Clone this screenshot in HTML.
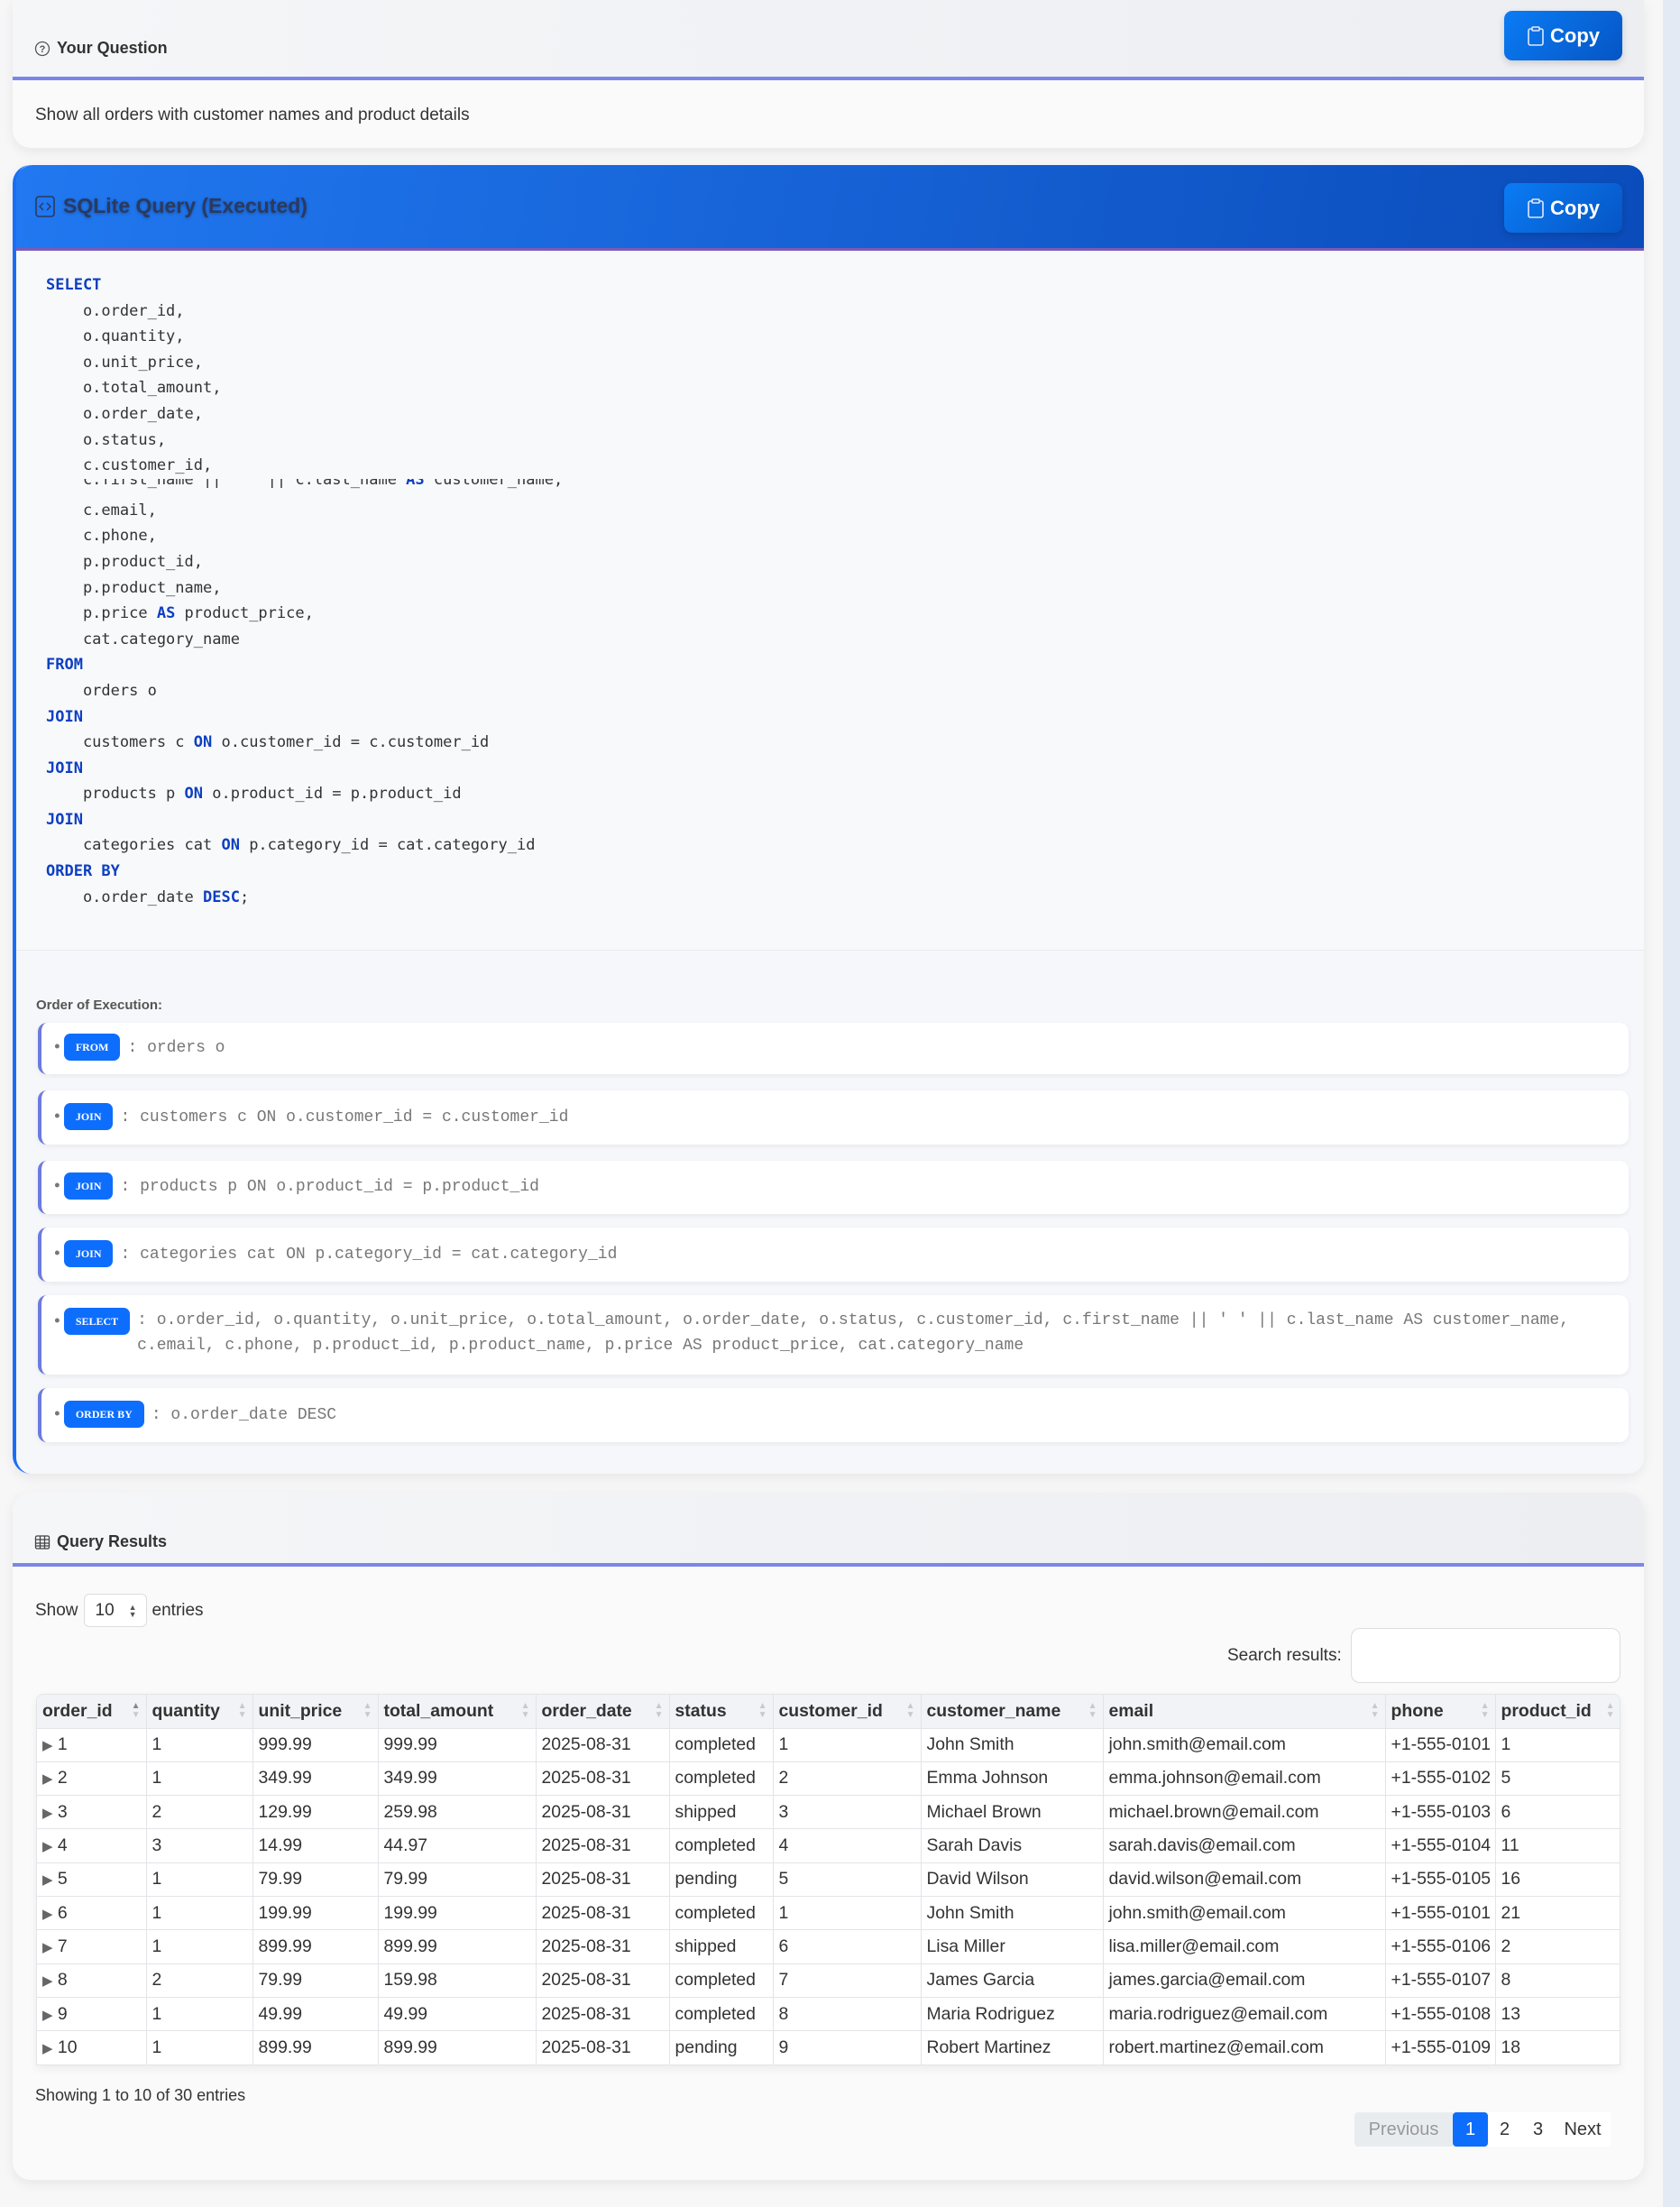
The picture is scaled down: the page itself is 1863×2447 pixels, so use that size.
<!DOCTYPE html>
<html><head><meta charset="utf-8"><style>
*{box-sizing:border-box;margin:0;padding:0}
body{width:1863px;height:2447px;background:#f7f7f8;font-family:"Liberation Sans",sans-serif;color:#333;position:relative;overflow:hidden}
.strip{position:absolute;left:1844px;top:0;width:19px;height:2447px;background:#e3eaf3}
.card{position:absolute;left:14px;width:1809px;background:#fafafa;border-radius:0 0 20px 20px;box-shadow:0 4px 14px rgba(0,0,0,.07)}
.hdr{background:linear-gradient(90deg,#f5f6f8,#eceef2);border-bottom:4px solid #7b86e8;position:relative}
.copy{position:absolute;right:24px;width:131px;height:55px;border-radius:9px;background:linear-gradient(135deg,#0a7cf5,#0655c4);color:#fff;font-weight:bold;font-size:22px;display:flex;align-items:center;justify-content:center;gap:6px;box-shadow:0 3px 8px rgba(0,0,0,.15)}
.mono{font-family:"DejaVu Sans Mono",monospace}
.code{font-size:17px;line-height:28.6px;color:#333;white-space:pre;padding-left:33px}
.k{color:#0d3fc1;font-weight:bold}
.item{position:absolute;left:24px;width:1764px;background:#fff;border-left:4px solid #6b7be0;border-radius:10px;box-shadow:0 2px 6px rgba(0,0,0,.06);font-family:"Liberation Mono",monospace;font-size:18px;color:#777}
.badge{display:inline-block;background:#0d6efd;color:#fff;font-family:"Liberation Serif",serif;font-weight:bold;font-size:12px;height:30px;line-height:30px;padding:0 13px;border-radius:7px;vertical-align:middle;margin:0 8px 0 2px}
table{border-collapse:collapse;font-size:19.4px;color:#333}
th{font-weight:bold;text-align:left;background:#f1f3f6;height:37px;padding:0 6px;border-right:1px solid #e2e4e8;position:relative;white-space:nowrap}
td{height:37.3px;padding:0 6px;border-right:1px solid #e2e4e8;border-top:1px solid #e2e4e8;background:#fff;white-space:nowrap;overflow:hidden}
th span{position:absolute;right:6px;top:8px;font-size:10px;color:#c5c9d0;line-height:10px}
</style></head><body>
<div class="strip"></div>

<div class="card" style="top:0;height:164px">
 <div class="hdr" style="height:89px">
  <div style="position:absolute;left:24px;top:43px;font-size:18px;font-weight:bold;color:#333;display:flex;align-items:center;gap:7px">
   <svg width="18" height="18" viewBox="0 0 18 18"><circle cx="9" cy="9" r="7.5" fill="none" stroke="#555" stroke-width="1.3"/><text x="9" y="13" font-size="11" text-anchor="middle" fill="#555" font-family="Liberation Sans">?</text></svg>Your Question</div>
  <div class="copy" style="top:12px"><svg width="20" height="22" viewBox="0 0 20 22"><rect x="2" y="3" width="16" height="18" rx="2" fill="none" stroke="#dce8ff" stroke-width="1.6"/><rect x="6" y="1" width="8" height="4" rx="1" fill="#1c6fe0" stroke="#dce8ff" stroke-width="1.6"/></svg>Copy</div>
 </div>
 <div style="position:absolute;left:25px;top:117px;font-size:19px;color:#333">Show all orders with customer names and product details</div>
</div>

<div class="card" style="top:183px;height:1451px;border-left:4px solid #1a6ef5;border-radius:20px 20px 20px 20px;background:#f8f9fb">
 <div style="height:95px;background:linear-gradient(100deg,#2178f0,#0b4cbb);border-radius:18px 18px 0 0;border-bottom:3px solid #7b5bb8;position:relative">
  <div style="position:absolute;left:20px;top:32px;font-size:23px;font-weight:bold;color:#2a3a60;display:flex;align-items:center;gap:8px;text-shadow:0 1px 3px rgba(0,0,0,.3)">
   <svg width="24" height="26" viewBox="0 0 24 26"><rect x="2" y="2" width="20" height="22" rx="3" fill="none" stroke="#2a3a60" stroke-width="1.6"/><path d="M10 9l-4 4 4 4M14 9l4 4-4 4" fill="none" stroke="#2a3a60" stroke-width="1.4"/></svg>SQLite Query (Executed)</div>
  <div class="copy" style="top:20px">
   <svg width="20" height="22" viewBox="0 0 20 22"><rect x="2" y="3" width="16" height="18" rx="2" fill="none" stroke="#dce8ff" stroke-width="1.6"/><rect x="6" y="1" width="8" height="4" rx="1" fill="#1c6fe0" stroke="#dce8ff" stroke-width="1.6"/></svg>Copy</div>
 </div>
 <div class="code mono" style="padding-top:24px;background:#f8f9fb"><span class="k">SELECT</span>
    o.order_id,
    o.quantity,
    o.unit_price,
    o.total_amount,
    o.order_date,
    o.status,
    c.customer_id,<div style="height:21px;overflow:hidden;position:relative"><div style="position:absolute;top:-13px">    c.first_name || ' ' || c.last_name <span class="k">AS</span> customer_name,</div></div>    c.email,
    c.phone,
    p.product_id,
    p.product_name,
    p.price <span class="k">AS</span> product_price,
    cat.category_name
<span class="k">FROM</span>
    orders o
<span class="k">JOIN</span>
    customers c <span class="k">ON</span> o.customer_id = c.customer_id
<span class="k">JOIN</span>
    products p <span class="k">ON</span> o.product_id = p.product_id
<span class="k">JOIN</span>
    categories cat <span class="k">ON</span> p.category_id = cat.category_id
<span class="k">ORDER BY</span>
    o.order_date <span class="k">DESC</span>;</div>
 <div style="position:absolute;left:0;top:870px;width:1805px;height:581px;background:#f6f7fa;border-top:1px solid #e9ebf0;border-radius:0 0 18px 18px">
  <div style="position:absolute;left:22px;top:52px;font-size:15px;font-weight:bold;color:#555">Order of Execution:</div>
  <div class="item" style="top:80px;height:57px;line-height:57px;padding-left:12px">•<span class="badge">FROM</span>: orders o</div>
  <div class="item" style="top:155px;height:60px;line-height:60px;padding-left:12px">•<span class="badge">JOIN</span>: customers c ON o.customer_id = c.customer_id</div>
  <div class="item" style="top:233px;height:59px;line-height:59px;padding-left:12px">•<span class="badge">JOIN</span>: products p ON o.product_id = p.product_id</div>
  <div class="item" style="top:307px;height:60px;line-height:60px;padding-left:12px">•<span class="badge">JOIN</span>: categories cat ON p.category_id = cat.category_id</div>
  <div class="item" style="top:382px;height:88px;padding-left:12px;padding-top:14px;line-height:28px"><div style="display:flex"><div style="white-space:nowrap">•<span class="badge">SELECT</span></div><div>: o.order_id, o.quantity, o.unit_price, o.total_amount, o.order_date, o.status, c.customer_id, c.first_name || ' ' || c.last_name AS customer_name, c.email, c.phone, p.product_id, p.product_name, p.price AS product_price, cat.category_name</div></div></div>
  <div class="item" style="top:485px;height:60px;line-height:60px;padding-left:12px">•<span class="badge">ORDER BY</span>: o.order_date DESC</div>
 </div>
</div>

<div class="card" style="top:1655px;height:762px;border-radius:20px">
 <div class="hdr" style="height:82px;border-radius:20px 20px 0 0">
  <div style="position:absolute;left:24px;top:44px;font-size:18px;font-weight:bold;display:flex;align-items:center;gap:7px">
   <svg width="18" height="18" viewBox="0 0 18 18" fill="none" stroke="#444" stroke-width="1.3"><rect x="1.5" y="2" width="15" height="14" rx="1.5"/><path d="M1.5 6h15M1.5 10h15M1.5 13h15M6.5 2v14M11.5 2v14"/></svg>Query Results</div>
 </div>
 <div style="position:absolute;left:25px;top:112px;font-size:19px;display:flex;align-items:center;gap:6px">Show <div style="width:70px;height:37px;border:1px solid #ddd;border-radius:6px;background:#fff;display:flex;align-items:center;padding-left:12px;position:relative">10<span style="position:absolute;right:10px;font-size:9px;line-height:8px;color:#555">▲<br>▼</span></div> entries</div>
 <div style="position:absolute;left:1347px;top:170px;font-size:19px">Search results:</div>
 <div style="position:absolute;left:1484px;top:150px;width:299px;height:61px;border:1px solid #ddd;border-radius:10px;background:#fff"></div>
 <div style="position:absolute;left:26px;top:223px;width:1757px;overflow:hidden;border-radius:8px 8px 0 0;box-shadow:0 4px 10px rgba(0,0,0,.06);border:1px solid #e2e4e8">
 <table style="width:1800px;table-layout:fixed">
  <colgroup><col style="width:121px"><col style="width:118px"><col style="width:139px"><col style="width:175px"><col style="width:148px"><col style="width:115px"><col style="width:164px"><col style="width:202px"><col style="width:313px"><col style="width:122px"><col style="width:183px"></colgroup>
  <tr><th>order_id<span style="color:#888">▲<br><span style="position:static;color:#c5c9d0">▼</span></span></th><th>quantity<span>▲<br>▼</span></th><th>unit_price<span>▲<br>▼</span></th><th>total_amount<span>▲<br>▼</span></th><th>order_date<span>▲<br>▼</span></th><th>status<span>▲<br>▼</span></th><th>customer_id<span>▲<br>▼</span></th><th>customer_name<span>▲<br>▼</span></th><th>email<span>▲<br>▼</span></th><th>phone<span>▲<br>▼</span></th><th>product_id<span style="right:50px">▲<br>▼</span></th></tr>
  <tr><td><span style="color:#666;font-size:15px">▶</span> 1</td><td>1</td><td>999.99</td><td>999.99</td><td>2025-08-31</td><td>completed</td><td>1</td><td>John Smith</td><td>john.smith@email.com</td><td>+1-555-0101</td><td>1</td></tr>
  <tr><td><span style="color:#666;font-size:15px">▶</span> 2</td><td>1</td><td>349.99</td><td>349.99</td><td>2025-08-31</td><td>completed</td><td>2</td><td>Emma Johnson</td><td>emma.johnson@email.com</td><td>+1-555-0102</td><td>5</td></tr>
  <tr><td><span style="color:#666;font-size:15px">▶</span> 3</td><td>2</td><td>129.99</td><td>259.98</td><td>2025-08-31</td><td>shipped</td><td>3</td><td>Michael Brown</td><td>michael.brown@email.com</td><td>+1-555-0103</td><td>6</td></tr>
  <tr><td><span style="color:#666;font-size:15px">▶</span> 4</td><td>3</td><td>14.99</td><td>44.97</td><td>2025-08-31</td><td>completed</td><td>4</td><td>Sarah Davis</td><td>sarah.davis@email.com</td><td>+1-555-0104</td><td>11</td></tr>
  <tr><td><span style="color:#666;font-size:15px">▶</span> 5</td><td>1</td><td>79.99</td><td>79.99</td><td>2025-08-31</td><td>pending</td><td>5</td><td>David Wilson</td><td>david.wilson@email.com</td><td>+1-555-0105</td><td>16</td></tr>
  <tr><td><span style="color:#666;font-size:15px">▶</span> 6</td><td>1</td><td>199.99</td><td>199.99</td><td>2025-08-31</td><td>completed</td><td>1</td><td>John Smith</td><td>john.smith@email.com</td><td>+1-555-0101</td><td>21</td></tr>
  <tr><td><span style="color:#666;font-size:15px">▶</span> 7</td><td>1</td><td>899.99</td><td>899.99</td><td>2025-08-31</td><td>shipped</td><td>6</td><td>Lisa Miller</td><td>lisa.miller@email.com</td><td>+1-555-0106</td><td>2</td></tr>
  <tr><td><span style="color:#666;font-size:15px">▶</span> 8</td><td>2</td><td>79.99</td><td>159.98</td><td>2025-08-31</td><td>completed</td><td>7</td><td>James Garcia</td><td>james.garcia@email.com</td><td>+1-555-0107</td><td>8</td></tr>
  <tr><td><span style="color:#666;font-size:15px">▶</span> 9</td><td>1</td><td>49.99</td><td>49.99</td><td>2025-08-31</td><td>completed</td><td>8</td><td>Maria Rodriguez</td><td>maria.rodriguez@email.com</td><td>+1-555-0108</td><td>13</td></tr>
  <tr><td><span style="color:#666;font-size:15px">▶</span> 10</td><td>1</td><td>899.99</td><td>899.99</td><td>2025-08-31</td><td>pending</td><td>9</td><td>Robert Martinez</td><td>robert.martinez@email.com</td><td>+1-555-0109</td><td>18</td></tr>
 </table></div>
 <div style="position:absolute;left:25px;top:658px;font-size:18px">Showing 1 to 10 of 30 entries</div>
 <div style="position:absolute;left:1488px;top:687px;height:38px;display:flex;font-size:20px;line-height:38px">
  <div style="width:109px;background:#e9ecef;color:#999;text-align:center;border-radius:4px 0 0 4px">Previous</div>
  <div style="width:39px;background:#0d6efd;color:#fff;text-align:center;border-radius:4px">1</div>
  <div style="width:37px;background:#fff;text-align:center">2</div>
  <div style="width:37px;background:#fff;text-align:center">3</div>
  <div style="width:62px;background:#fff;text-align:center">Next</div>
 </div>
</div>
</body></html>
